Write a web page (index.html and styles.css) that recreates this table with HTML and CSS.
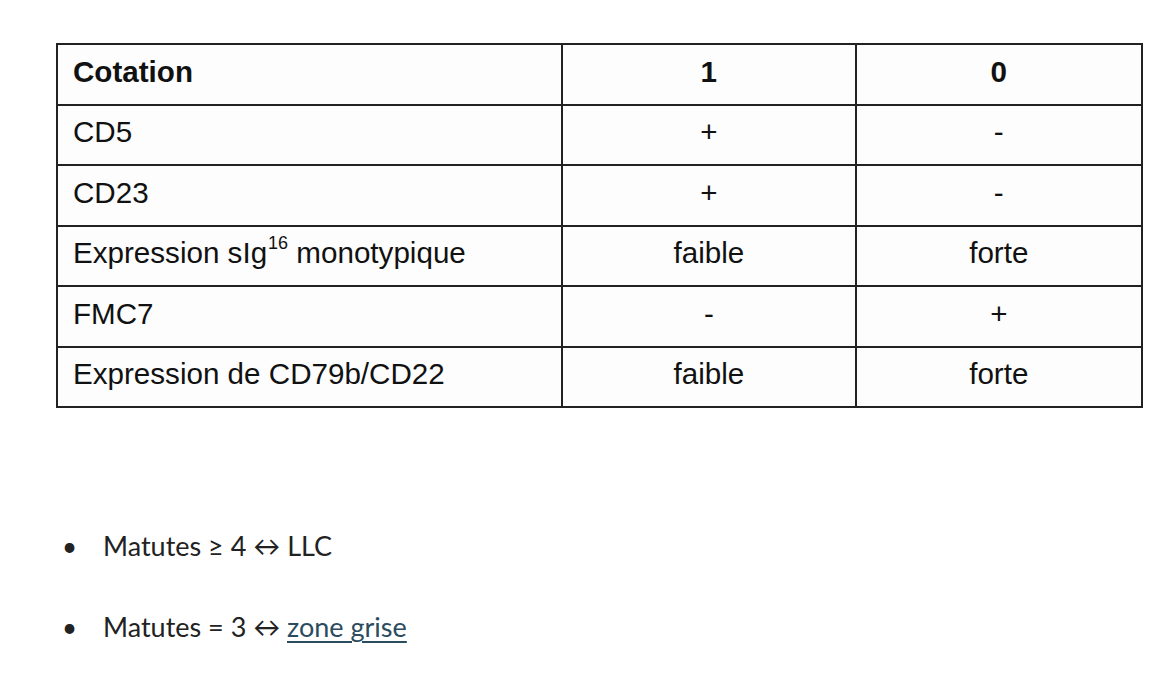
FILE: index.html
```html
<!DOCTYPE html>
<html lang="fr">
<head>
<meta charset="utf-8">
<title>Score de Matutes</title>
<link rel="stylesheet" href="styles.css">
</head>
<body>
<main class="page">
  <div class="table-wrap">
    <table class="score">
      <colgroup>
        <col class="c-label">
        <col class="c-one">
        <col class="c-zero">
      </colgroup>
      <thead>
        <tr><th class="left">Cotation</th><th>1</th><th>0</th></tr>
      </thead>
      <tbody>
        <tr><td class="left">CD5</td><td>+</td><td>-</td></tr>
        <tr><td class="left">CD23</td><td>+</td><td>-</td></tr>
        <tr><td class="left">Expression sIg<sup>16</sup> monotypique</td><td>faible</td><td>forte</td></tr>
        <tr><td class="left">FMC7</td><td>-</td><td>+</td></tr>
        <tr><td class="left">Expression de CD79b/CD22</td><td>faible</td><td>forte</td></tr>
      </tbody>
    </table>
  </div>
  <ul class="results">
    <li>Matutes ≥ 4 ↔ LLC</li>
    <li>Matutes = 3 ↔ <a href="#">zone grise</a></li>
  </ul>
</main>
</body>
</html>
```
FILE: styles.css
```css
* { box-sizing: border-box; }
html, body { margin: 0; padding: 0; background: #ffffff; }
.page { padding: 43px 0 0 56px; }
.table-wrap { width: 1087px; }
.score {
  width: 1087px;
  border-collapse: collapse;
  font-family: "Liberation Sans", Arial, sans-serif;
  font-size: 29.6px;
  color: #111;
  background: #fdfdfd;
}
.c-label { width: 506px; }
.c-one { width: 294px; }
.c-zero { width: 287px; }
.score th, .score td {
  border: 2px solid #222;
  height: 60.5px;
  padding: 0 15px 5px 15px;
  text-align: center;
  vertical-align: middle;
  line-height: 1;
}
.score th { font-weight: 700; }
.score td { font-weight: 400; }
.score .left { text-align: left; }
.score sup { font-size: 18px; vertical-align: 14px; line-height: 0; margin-left: 1px; }
.results {
  list-style: none;
  margin: 123px 0 0 0;
  padding: 0 0 0 6px;
  font-family: Lato, "Open Sans", sans-serif;
  font-size: 27px;
  color: #222;
}
.results li {
  display: flex;
  line-height: 30px;
  margin-bottom: 51px;
}
.results li::before {
  content: "•";
  width: 41px;
  flex: none;
  font-size: 26px;
}
.results a { color: #2b4b5f; text-decoration: underline; text-underline-offset: 4px; text-decoration-thickness: 2px; margin-left: 0.25em; }
```
